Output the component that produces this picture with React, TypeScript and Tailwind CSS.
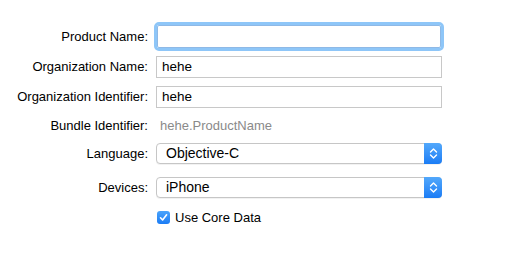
const Chevrons = () => (
  <svg width="9" height="13" viewBox="0 0 9 13" fill="none">
    <path d="M1.5 5 L4.5 2 L7.5 5" stroke="white" strokeWidth="1.4" strokeLinecap="round" strokeLinejoin="round" />
    <path d="M1.5 8 L4.5 11 L7.5 8" stroke="white" strokeWidth="1.4" strokeLinecap="round" strokeLinejoin="round" />
  </svg>
);

const Label = ({ text }: { text: string }) => (
  <div className="w-[148px] shrink-0 text-right text-black">{text}</div>
);

const Popup = ({ value }: { value: string }) => (
  <div className="ml-2 flex h-[21px] w-[286px] items-stretch rounded-[4px] border border-[#c6c6c6] bg-white shadow-[0_1px_0_rgba(0,0,0,0.05)]">
    <div className="flex flex-1 items-center pl-[9px] text-[14px] text-black">{value}</div>
    <div className="-my-px -mr-px flex w-[18px] items-center justify-center rounded-r-[4px] bg-gradient-to-b from-[#52a8fb] to-[#1a7cf5]">
      <Chevrons />
    </div>
  </div>
);

export default function App() {
  return (
    <div
      className="flex h-[265px] w-[525px] flex-col bg-white pt-[25px] text-[13px]"
      style={{ fontFamily: '"Liberation Sans", Arial, sans-serif' }}
    >
      <div className="flex h-[23px] items-center">
        <Label text="Product Name:" />
        <div className="ml-2 h-[23px] w-[284px] translate-x-px rounded-[2px] border border-[#8fb9e6] bg-white outline-[3px] outline-solid outline-[#8ec6f8]" />
      </div>
      <div className="mt-[8px] flex h-[22px] items-center">
        <Label text="Organization Name:" />
        <div className="ml-2 flex h-[22px] w-[286px] items-center border border-[#c8c8c8] bg-white pl-[5px] text-[13.5px] text-black">
          hehe
        </div>
      </div>
      <div className="mt-[8px] flex h-[22px] items-center">
        <Label text="Organization Identifier:" />
        <div className="ml-2 flex h-[22px] w-[286px] items-center border border-[#c8c8c8] bg-white pl-[5px] text-[13.5px] text-black">
          hehe
        </div>
      </div>
      <div className="mt-[10px] flex h-[16px] items-center">
        <Label text="Bundle Identifier:" />
        <div className="ml-2 pl-[4px] text-[13px] text-[#8a8a8a]">hehe.ProductName</div>
      </div>
      <div className="mt-[9px] flex h-[21px] items-center">
        <Label text="Language:" />
        <Popup value="Objective-C" />
      </div>
      <div className="mt-[13px] flex h-[21px] items-center">
        <Label text="Devices:" />
        <Popup value="iPhone" />
      </div>
      <div className="mt-[13px] flex h-[13px] items-center pl-[157px]">
        <div className="flex h-[13px] w-[13px] items-center justify-center rounded-[3px] bg-gradient-to-b from-[#4aa3fb] to-[#1a7cf5]">
          <svg width="9" height="9" viewBox="0 0 9 9" fill="none">
            <path d="M1.5 4.8 L3.6 7 L7.6 1.8" stroke="white" strokeWidth="1.6" strokeLinecap="round" strokeLinejoin="round" />
          </svg>
        </div>
        <span className="ml-[5px] text-[13px] text-black">Use Core Data</span>
      </div>
    </div>
  );
}
